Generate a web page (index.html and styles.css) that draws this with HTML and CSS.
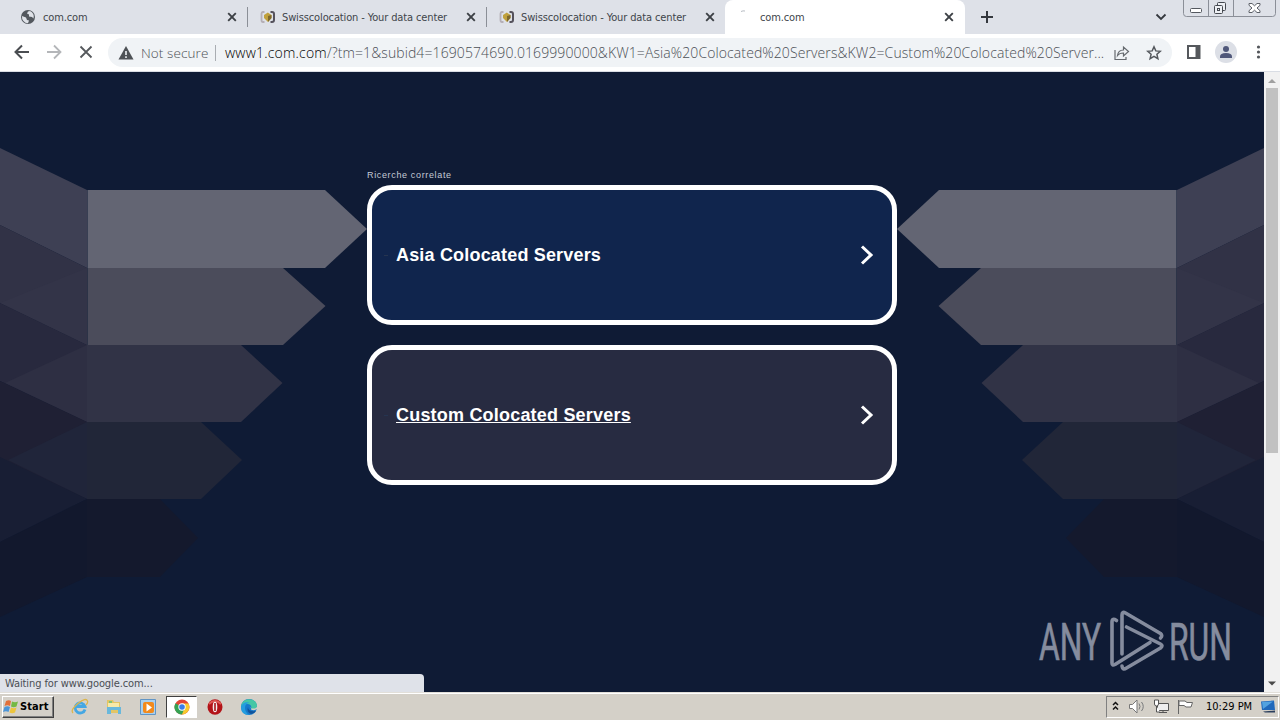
FILE: index.html
```html
<!DOCTYPE html>
<html lang="en">
<head>
<meta charset="utf-8">
<title>com.com</title>
<link rel="stylesheet" href="styles.css">
</head>
<body>
<svg class="defs" width="0" height="0">
  <defs>
    <symbol id="close" viewBox="0 0 10 10"><path d="M1.2 1.2l7.6 7.6M8.8 1.2L1.2 8.8" stroke="#3c4045" stroke-width="1.9"/></symbol>
    <symbol id="swiss" viewBox="0 0 16 16">
      <path d="M4.500 3H3Q1.500 3 1.500 5v6q0 2 1.500 2h1.500" fill="none" stroke="#b5afb6" stroke-width="1.800"/>
      <path d="M10.500 3H12q2 0 2 2v6q0 2-2 2h-1.500" fill="none" stroke="#55525c" stroke-width="2"/>
      <path d="M4 6L7.800 3.500 11.500 6v3L8 13 4 9z" fill="#c0a03c"/>
      <path d="M8 7v6l3.500-4V6z" fill="#7d682e"/>
    </symbol>
    <symbol id="chevron" viewBox="0 0 14 20"><path d="M2 1.500l9 8.500-9 8.500" fill="none" stroke="#fff" stroke-width="3"/></symbol>
  </defs>
</svg>
<div class="screen">
  <div class="tabs">
    <div class="tab first">
      <svg class="fav" width="16" height="16" viewBox="0 0 16 16"><circle cx="8" cy="8" r="7" fill="#53585e"/><path d="M2 7l4 1.500 1 2.500 2 .5-1 2.800A6.500 6.500 0 0 1 2 7zM8 2.500l-1 2 2 1v2l3 .5 1.500 1.500A6 6 0 0 0 10 2z" fill="#dfe2e8"/></svg>
      <span class="title short">com.com</span>
      <svg class="x" width="10" height="10"><use href="#close"/></svg>
    </div>
    <div class="tab second">
      <svg class="fav" width="16" height="16"><use href="#swiss"/></svg>
      <span class="title">Swisscolocation - Your data center</span>
      <svg class="x" width="10" height="10"><use href="#close"/></svg>
    </div>
    <div class="tab third">
      <svg class="fav" width="16" height="16"><use href="#swiss"/></svg>
      <span class="title">Swisscolocation - Your data center</span>
      <svg class="x" width="10" height="10"><use href="#close"/></svg>
    </div>
    <div class="tab active">
      <svg class="fav" width="16" height="16" viewBox="0 0 16 16"><path d="M5 2.500q2-1 4-.5" stroke="#b8bdc4" fill="none"/></svg>
      <span class="title short">com.com</span>
      <svg class="x" width="10" height="10"><use href="#close"/></svg>
    </div>
    <svg class="plus" width="14" height="14" viewBox="0 0 14 14"><path d="M7 1v12M1 7h12" stroke="#34383e" stroke-width="2"/></svg>
    <svg class="down" width="12" height="8" viewBox="0 0 12 8"><path d="M1.500 1.500L6 6l4.500-4.500" fill="none" stroke="#34383e" stroke-width="1.800"/></svg>
    <svg class="caption" width="94" height="18" viewBox="0 0 94 18" fill="none" stroke="#8b8f98">
      <path d="M.5 0v13.500q0 3 3 3h86q3 0 3-3V0M25.500 0v16.500M50.500 0v16.500"/>
      <rect x="7.500" y="8.500" width="11" height="4" rx="1" fill="#fff" stroke="#54585f"/>
      <g stroke="#454950" fill="#eef0f4"><rect x="34.500" y="2.500" width="8" height="8" rx="1"/><rect x="31.500" y="5.500" width="8" height="8" rx="1"/><rect x="34.500" y="8.500" width="2" height="2"/></g>
      <path d="M66 3.500h3l2.500 2.300L74 3.500h3v1.800L74 8l3 2.700v1.800h-3l-2.500-2.300L69 12.500h-3v-1.800L69 8l-3-2.700z" fill="#fff" stroke="#5c6068"/>
    </svg>
  </div>
  <div class="toolbar">
    <svg class="nav" width="108" height="36" viewBox="0 0 108 36" fill="none">
      <path d="M29 18H16M22 11.500L15.500 18l6.500 6.500" stroke="#4a4d51" stroke-width="2"/>
      <path d="M47 18h13M54 11.500l6.500 6.500-6.500 6.500" stroke="#b4b6b9" stroke-width="1.800"/>
      <path d="M80.500 12.500l11 11M91.500 12.500l-11 11" stroke="#55585c" stroke-width="1.800"/>
    </svg>
    <div class="omnibox">
      <svg class="warn" width="16" height="14" viewBox="0 0 16 14"><path d="M8 0l7.500 13.500H.5z" fill="#4e5256"/><path d="M8 5v4M8 10.300v1.700" stroke="#f0f3f6" stroke-width="1.600"/></svg>
      <span class="notsecure">Not secure</span>
      <span class="bar"></span>
      <span class="url"><b>www1.com.com</b>/?tm=1&amp;subid4=1690574690.0169990000&amp;KW1=Asia%20Colocated%20Servers&amp;KW2=Custom%20Colocated%20Server...</span>
      <svg class="share" width="16" height="16" viewBox="0 0 16 16" fill="none" stroke="#65696e" stroke-width="1.200"><path d="M1 5v9.500h11V12M3.500 10.500C4 6.500 6.500 5 9.500 5V2l5 4.500-5 4.500V8C7 8 5 8.500 3.500 10.500z"/></svg>
      <svg class="star" width="16" height="16" viewBox="0 0 16 16"><path d="M8 1.800l1.800 4.100 4.500.4-3.400 3 1 4.400L8 11.400l-3.900 2.300 1-4.400-3.400-3 4.500-.4z" fill="none" stroke="#54585d" stroke-width="1.500"/></svg>
    </div>
    <svg class="tools" width="108" height="36" viewBox="0 0 108 36">
      <path d="M16 12h11v12H16z" fill="none" stroke="#55585c" stroke-width="2"/><path d="M23.500 11h5v14h-5z" fill="#55585c"/>
      <circle cx="54" cy="18" r="11" fill="#dcdfe6"/><circle cx="54" cy="15" r="3" fill="#50587a"/><path d="M48 24v-1.500q0-3.500 6-3.500t6 3.500V24z" fill="#50587a"/>
      <g fill="#53565a"><circle cx="86.500" cy="13" r="1.600"/><circle cx="86.500" cy="18" r="1.600"/><circle cx="86.500" cy="23" r="1.600"/></g>
    </svg>
  </div>
  <div class="viewport">
    <div class="page">
      <svg class="art" width="1264" height="620" viewBox="0 72 1264 620">
        <defs><g id="wing">
          <path d="M0 148l87 42v78L0 225z" fill="#3e4054"/>
          <path d="M0 225l87 43v77L0 303z" fill="#313246"/>
          <path d="M87 268v77L0 303z" fill="#333448"/>
          <path d="M0 303l87 42v77L0 381z" fill="#28293e"/>
          <path d="M87 345v77L5 383z" fill="#2e2f43"/>
          <path d="M0 381l87 41v77L0 460z" fill="#1f2034"/>
          <path d="M87 422v77L8 460z" fill="#20253a"/>
          <path d="M0 457l87 42L0 542z" fill="#181e34"/>
          <path d="M87 499v78L0 617v-75z" fill="#12182d"/>
          <path d="M87.500 190H325l42 39-42 39H87.500z" fill="#636573"/>
          <path d="M87.500 268H283l42.500 38-42.500 39H87.500z" fill="#4b4c5b"/>
          <path d="M87 345h154l41.500 38-41.500 39H87z" fill="#313346"/>
          <path d="M87 422h114l41 38-41 39H87z" fill="#212638"/>
          <path d="M87 499h73l38 39-38 39H87z" fill="#14192d"/>
        </g></defs>
        <use href="#wing"/><use href="#wing" transform="translate(1264 0) scale(-1 1)"/>
      </svg>
      <main class="results">
        <div class="label">Ricerche correlate</div>
        <a class="card blue"><i class="dash"></i><span class="name">Asia Colocated Servers</span><svg width="14" height="20"><use href="#chevron"/></svg></a>
        <a class="card hover"><i class="dash"></i><span class="name wide">Custom Colocated Servers</span><svg width="14" height="20"><use href="#chevron"/></svg></a>
      </main>
      <svg class="watermark" width="204" height="68" viewBox="1035 606 204 68">
        <g fill="#858c9e" stroke="#858c9e" stroke-width=".7" font-family="Roboto, sans-serif" font-size="51">
          <text x="1039" y="659.500" textLength="62" lengthAdjust="spacingAndGlyphs">ANY</text>
          <text x="1169" y="659.500" textLength="63" lengthAdjust="spacingAndGlyphs">RUN</text>
        </g>
        <g fill="none" stroke="#858c9e" stroke-width="3.600" stroke-linejoin="round" stroke-linecap="round">
          <path d="M1116.500 620.500q-4.500-3-4.500 1.500v41q0 3 3 1.500l35-22"/>
          <path d="M1122 654v-39q0-4 3.500-2l35 20.500q2.500 2 0 4.500"/>
          <path d="M1126.500 627l34 17q3 1.500 0 4l-34 20q-4 2.500-4.500-2"/>
        </g>
      </svg>
      <div class="status">Waiting for www.google.com...</div>
    </div>
    <div class="scrollbar">
      <svg width="16" height="16" viewBox="0 0 16 16"><path d="M4 11l4-4 4 4z" fill="#a0a0a0"/></svg>
      <div class="thumb"></div>
      <svg width="16" height="16" viewBox="0 0 16 16"><path d="M4 5.500h8L8 9.500z" fill="#4a4a4a"/></svg>
    </div>
  </div>
  <div class="taskbar">
    <div class="start">
      <svg width="17" height="16" viewBox="0 0 17 16"><path d="M3 2q3-1.500 5 0L7 7Q4.500 5.500 1.500 7z" fill="#e2703a"/><path d="M9 2.500q3 1.500 6 0L13.500 7.500q-3 1.500-5.500 0z" fill="#74b944"/><path d="M1.500 8q3-1.500 5.500 0l-1.500 5Q3 11.500 0 13z" fill="#4b95d8"/><path d="M8 8.500q3 1.500 5.500 0L12 13.500q-3 1.500-5.500 0z" fill="#edc53d"/></svg>
      <span>Start</span>
    </div>
    <svg class="app ie" width="18" height="18" viewBox="0 0 18 18" fill="none"><path d="M14 11.500A5 5 0 1 1 14 8.500H5" stroke="#45a7e3" stroke-width="2.800"/><path d="M2 15Q-1 12 7 5.500T16.500 3q.8 1.200-1.500 4" stroke="#dcb54c" stroke-width="1.300"/></svg>
    <svg class="app folder" width="18" height="18" viewBox="0 0 18 18"><path d="M2 2h6l1 2h6v11H2z" fill="#e3c565"/><path d="M3 5h11v5H3z" fill="#f7e9a8"/><path d="M2 9h14v7h-3v-4H6v4H2z" fill="#69b8dc"/><path d="M4 3h3v2H4z" fill="#7fc279"/></svg>
    <svg class="app media" width="18" height="18" viewBox="0 0 18 18"><path d="M1.500 1.500h15v15h-15z" fill="#a9d0ef" stroke="#6195c5"/><rect x="4" y="4" width="11" height="11" rx="2" fill="#f28a1c"/><path d="M7.500 5.500L13 9.500l-5.500 4z" fill="#fff"/></svg>
    <div class="running"><svg width="18" height="18" viewBox="0 0 18 18"><circle cx="9" cy="9" r="7.500" fill="#e44435"/><path d="M9 9L2.500 5.200A7.500 7.500 0 0 0 9 16.500l3.500-6z" fill="#35a353"/><path d="M9 9h3L9 16.500A7.500 7.500 0 0 0 15.500 5.500H9z" fill="#f8c92e"/><circle cx="9" cy="9" r="3.700" fill="#fff"/><circle cx="9" cy="9" r="2.800" fill="#3b7de8"/></svg></div>
    <svg class="app opera" width="18" height="18" viewBox="0 0 18 18"><ellipse cx="9" cy="9" rx="7.500" ry="7.800" fill="#b31318"/><path d="M3 6q6-6 12 0" stroke="#de5a56" stroke-width="2" fill="none"/><ellipse cx="9" cy="9" rx="2.300" ry="5.300" fill="#f4eeee"/><path d="M9 5v8" stroke="#a81518" stroke-width="1.600"/></svg>
    <svg class="app edge" width="18" height="18" viewBox="0 0 18 18"><circle cx="9" cy="9" r="8" fill="#1679cb"/><path d="M1 9C2-2 17-.5 17 8c0 4-5 4.500-6 2.500 1-2-.5-4.500-3.500-4.500Q3 6 1 9z" fill="#45c7a5"/><path d="M1 9c1-4 5-6 9-4Q5 5 5 10q0 4 4 7Q1 17 1 9z" fill="#249ddf"/><path d="M8 9q0 5 8 4-2 3-5 3-5-2-3-7z" fill="#11539c"/><path d="M9.500 8q2 2 1.500 3.500 3 1.500 6-.5V9l-2 1.500h-4z" fill="#d4d0c8"/></svg>
    <div class="tray">
      <svg width="96" height="20" viewBox="0 0 96 20" fill="none">
        <path d="M6 8l2.500-2.500L11 8M6 12.500L8.500 10l2.500 2.500" stroke="#111" stroke-width="1.500"/>
        <path d="M22.500 7.500h3L30 3v13l-4.500-4.500h-3z" fill="#fff" stroke="#777"/><path d="M32 6.500q2 3 0 6M34.500 5q3.500 4.500 0 9" stroke="#77797b"/>
        <path d="M50.500 6.500h11v7h-11zM52 15.500h8M56 13v2.500" fill="#eee" stroke="#555"/><path d="M47.500 3v4q0 2 2 2t2-2V3zM49.500 9v6H53" fill="#fff" stroke="#555"/>
        <path d="M71.500 3v14M72 4h6l2 1.500h5.500L84 10h-5l-2-1.500h-5z" fill="#fff" stroke="#666"/>
      </svg>
      <span class="clock">10:29 PM</span>
      <svg class="desktop" width="16" height="14" viewBox="0 0 16 14"><path d="M1 1.500l13-1 1 9.500H2z" fill="#2068bb"/><path d="M2 2l11-.5L3 9z" fill="#52a2e0"/><path d="M3 11.500l12-1v2H5z" fill="#2b3f5d"/></svg>
    </div>
  </div>
</div>
</body>
</html>
```
FILE: styles.css
```css
* { box-sizing: border-box; }
body { margin: 0; overflow: hidden; font-family: "DejaVu Sans Condensed", "DejaVu Sans", sans-serif; }
svg { display: block; flex: none; }
.defs { position: absolute; }
.screen { width: 1280px; height: 720px; display: flex; flex-direction: column; overflow: hidden; }

.tabs { height: 34px; flex: none; display: flex; background: #dee1e8; }
.tab { height: 34px; display: flex; align-items: center; padding: 0 11px 0 12px; width: 239px; flex: none; position: relative; }
.tab.first { width: 248px; padding-left: 20px; }
.tab.first::after, .tab.second::after { content: ""; position: absolute; right: 0; top: 7px; width: 1px; height: 20px; background: #8b8f97; }
.tab.third { width: 238px; padding-right: 10px; }
.tab.active { width: 240px; background: #fff; border-radius: 8px 8px 0 0; padding-left: 11px; }
.fav { margin-right: 6px; }
.active .fav { margin-right: 7px; }
.title { flex: 1; white-space: nowrap; font-size: 11px; line-height: 16px; padding-top: 1px; color: #41454b; letter-spacing: -0.13px; }
.title.short { margin-left: 1px; }
.plus { margin: 10px 0 0 15px; }
.down { margin: 13px 0 0 161px; }
.caption { margin-left: 16px; }

.toolbar { height: 38px; flex: none; display: flex; background: #fff; border-bottom: 1px solid #d9dde4; }
.omnibox { width: 1064px; height: 29px; margin-top: 4px; border-radius: 15px; background: #f0f3f6; display: flex; align-items: center; flex: none; color: #63676c; }
.warn { margin-left: 10px; }
.notsecure { width: 75px; margin-left: 7px; font: 300 13.5px/20px "Open Sans", sans-serif; color: #4c5055; letter-spacing: 0.1px; white-space: nowrap; }
.bar { width: 1px; height: 16px; background: #a9adb2; margin-left: -1px; }
.url { width: 881px; margin-left: 9px; font: 300 14px/20px "Open Sans", sans-serif; color: #4b4f55; white-space: nowrap; letter-spacing: 0.1px; }
.url b { font-weight: 300; color: #000; letter-spacing: 0.2px; }
.share { margin-left: 8px; }
.star { margin-left: 16px; }

.viewport { height: 620px; flex: none; display: flex; }
.page { width: 1264px; height: 620px; background: #0f1b35; position: relative; overflow: hidden; }
.art { position: absolute; left: 0; top: 0; }
.results { position: relative; width: 530px; margin: 0 auto; padding-top: 96px; display: flex; flex-direction: column; }
.label { height: 17px; font: 9px/14px "Liberation Sans", Arial, sans-serif; letter-spacing: 0.65px; color: #c5cad6; }
.card { height: 140px; border: 5px solid #fff; border-radius: 25px; margin-bottom: 20px; padding: 0 18px 0 12px; display: flex; align-items: center; color: #fff; }
.blue { background: #10254d; }
.hover { background: #272b41; text-decoration: underline; }
.dash { width: 4px; height: 1px; margin-right: 8px; background: #253450; }
.name { flex: 1; font: bold 18px/22px "Liberation Sans", Arial, sans-serif; letter-spacing: 0.18px; }
.name.wide { letter-spacing: 0.2px; }
.watermark { position: absolute; left: 1035px; top: 534px; }
.status { position: absolute; left: 0; bottom: 0; width: 424px; height: 18px; padding-left: 5px; background: #dfe2e9; border-radius: 0 4px 0 0; color: #4b4e54; font-size: 11px; line-height: 19px; letter-spacing: -0.1px; }
.scrollbar { width: 16px; background: #f1f1f1; display: flex; flex-direction: column; align-items: center; }
.thumb { width: 12px; height: 365px; background: #c1c1c1; margin-bottom: auto; }

.taskbar { height: 28px; flex: none; display: flex; align-items: center; background: #d4d0c8; border-top: 1px solid #e2dfd9; box-shadow: inset 0 1px #fff; padding: 0 1px 0 2px; }
.start { width: 52px; height: 22px; display: flex; align-items: center; border: 1px solid; border-color: #fff #404040 #404040 #fff; box-shadow: inset -1px -1px #808080; font: bold 11px "DejaVu Sans Condensed", sans-serif; color: #000; letter-spacing: 0.1px; padding-left: 0; }
.app { margin-left: 16px; }
.app.ie { margin-left: 17px; }
.running { width: 31px; height: 22px; margin-left: 9px; background: #fff; border: 1px solid; border-color: #404040 #fff #fff #404040; display: flex; align-items: center; justify-content: center; }
.app.opera { margin-left: 9px; }
.tray { width: 173px; height: 22px; margin-left: auto; border: 1px solid; border-color: #808080 #fff #fff #808080; display: flex; align-items: center; }
.clock { width: 46px; margin-left: 3px; font-size: 11px; color: #000; white-space: nowrap; }
.desktop { margin-left: 8px; }
```
